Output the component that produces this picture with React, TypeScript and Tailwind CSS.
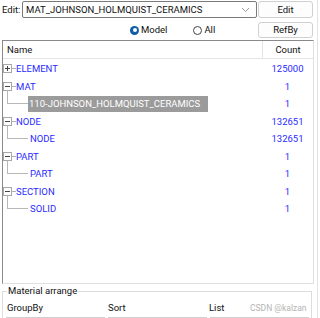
import React from "react";

const blue = "text-[#2b2bff]";

function Box({ open }: { open: boolean }) {
  return (
    <div className="w-[9px] h-[9px] border border-[#a8a8a8] bg-white flex items-center justify-center relative shrink-0">
      <div className="w-[5px] h-px bg-[#444]" />
      {!open && <div className="absolute w-px h-[5px] bg-[#444]" />}
    </div>
  );
}

type Child = { name: string; count: string; sel?: boolean };
type Node = { name: string; count: string; open?: boolean; children?: Child[] };

const data: Node[] = [
  { name: "ELEMENT", count: "125000", open: false },
  { name: "MAT", count: "1", open: true, children: [{ name: "110-JOHNSON_HOLMQUIST_CERAMICS", count: "1", sel: true }] },
  { name: "NODE", count: "132651", open: true, children: [{ name: "NODE", count: "132651" }] },
  { name: "PART", count: "1", open: true, children: [{ name: "PART", count: "1" }] },
  { name: "SECTION", count: "1", open: true, children: [{ name: "SOLID", count: "1" }] },
];

export default function App() {
  return (
    <div
      className="w-[320px] h-[318px] bg-white overflow-hidden text-[9.5px] text-[#111] relative flex flex-col"
      style={{ fontFamily: 'Roboto, "Noto Sans", sans-serif' }}
    >
      <div className="absolute left-[317px] top-0 bottom-0 w-px bg-[#e3e3e3]" />
      {/* Row 1 */}
      <div className="flex items-center h-[17px] mt-[1px] pl-[2px] shrink-0">
        <span className="w-[20px] leading-none">Edit:</span>
        <div className="w-[235px] h-[17px] border border-[#7a7a7a] rounded-[2px] flex items-center pl-[3px] pr-[6px] bg-white">
          <span className="flex-1 leading-none">MAT_JOHNSON_HOLMQUIST_CERAMICS</span>
          <svg width="9" height="6" viewBox="0 0 9 6">
            <path d="M1 1 L4.5 4.5 L8 1" fill="none" stroke="#9a9a9a" strokeWidth="1" />
          </svg>
        </div>
        <div className="ml-[1px] w-[55px] h-[17px] border border-[#d0d0d0] rounded-[3px] bg-[#fdfdfd] flex items-center justify-center leading-none">
          Edit
        </div>
      </div>
      {/* Row 2 */}
      <div className="flex items-center h-[16px] mt-[4px] shrink-0">
        <div className="ml-[130px] flex items-center">
          <div className="w-[9px] h-[9px] rounded-full bg-[#0f5ea8] flex items-center justify-center">
            <div className="w-[4px] h-[4px] rounded-full bg-white" />
          </div>
          <span className="ml-[2px] leading-none">Model</span>
        </div>
        <div className="ml-[26px] flex items-center">
          <div className="w-[9px] h-[9px] rounded-full border border-[#444]" />
          <span className="ml-[2px] leading-none">All</span>
        </div>
        <div className="ml-auto mr-[7px] w-[55px] h-[16px] border border-[#d0d0d0] rounded-[3px] bg-[#fdfdfd] flex items-center justify-center leading-none">
          RefBy
        </div>
      </div>
      {/* Tree panel */}
      <div className="mt-[2px] ml-[2px] w-[312px] h-[244px] shrink-0 border-t border-l border-[#8a8a8a] border-r border-b border-r-[#e0e0e0] border-b-[#e0e0e0] bg-white flex flex-col">
        <div className="flex h-[18px] border-b border-[#e5e5e5] shrink-0">
          <div className="flex-1 pl-[4px] flex items-center leading-none">Name</div>
          <div className="w-[51px] border-l border-[#e5e5e5] flex items-center justify-center leading-none">Count</div>
        </div>
        <div className="flex flex-col pt-[1px]">
          {data.map((n) => (
            <div key={n.name} className="flex flex-col">
              <div className="flex h-[17.5px] items-center">
                <div className="flex-1 flex items-center relative h-full">
                  <Box open={!!n.open} />
                  <div className="w-[4px] h-px bg-[#b0b0b0]" />
                  <span className={`${blue} leading-none`}>{n.name}</span>
                  {n.children && (
                    <div className="absolute left-[4px] top-[13px] w-px h-[13px] bg-[#b8b8b8]" />
                  )}
                </div>
                <div className={`w-[51px] text-center leading-none ${blue}`}>{n.count}</div>
              </div>
              {n.children?.map((c) => (
                <div key={c.name} className="flex h-[17.5px] items-center">
                  <div className="flex-1 flex items-center pl-[4px] h-full">
                    <div className="w-[21px] h-px bg-[#b8b8b8]" />
                    {c.sel ? (
                      <span className="bg-[#9b9b9b] text-white leading-none pl-[1px] w-[180px] h-[16px] flex items-center">{c.name}</span>
                    ) : (
                      <span className={`${blue} leading-none ml-[1px] pl-[1px]`}>{c.name}</span>
                    )}
                  </div>
                  <div className={`w-[51px] text-center leading-none ${blue}`}>{c.count}</div>
                </div>
              ))}
            </div>
          ))}
        </div>
      </div>
      {/* Bottom group */}
      <div className="relative mt-[7px] ml-[2px] w-[310px] h-[40px] shrink-0 border-t border-l border-r border-[#dcdcdc]">
        <span className="absolute left-[4px] -top-[6px] bg-white px-px leading-none">Material arrange</span>
        <div className="flex mt-[11px] pl-[4px] leading-none items-center">
          <span className="w-[101px]">GroupBy</span>
          <span className="w-[101px]">Sort</span>
          <span className="w-[41px]">List</span>
          <span className="text-[#b4b4b4] text-[8.5px]">CSDN @kalzan</span>
        </div>
        <div className="flex mt-[4px] pl-[3px] gap-[3px]">
          <div className="w-[99px] h-[10px] border border-[#cfcfcf]" />
          <div className="w-[99px] h-[10px] border border-[#cfcfcf]" />
          <div className="w-[99px] h-[10px] border border-[#cfcfcf]" />
        </div>
      </div>
    </div>
  );
}
